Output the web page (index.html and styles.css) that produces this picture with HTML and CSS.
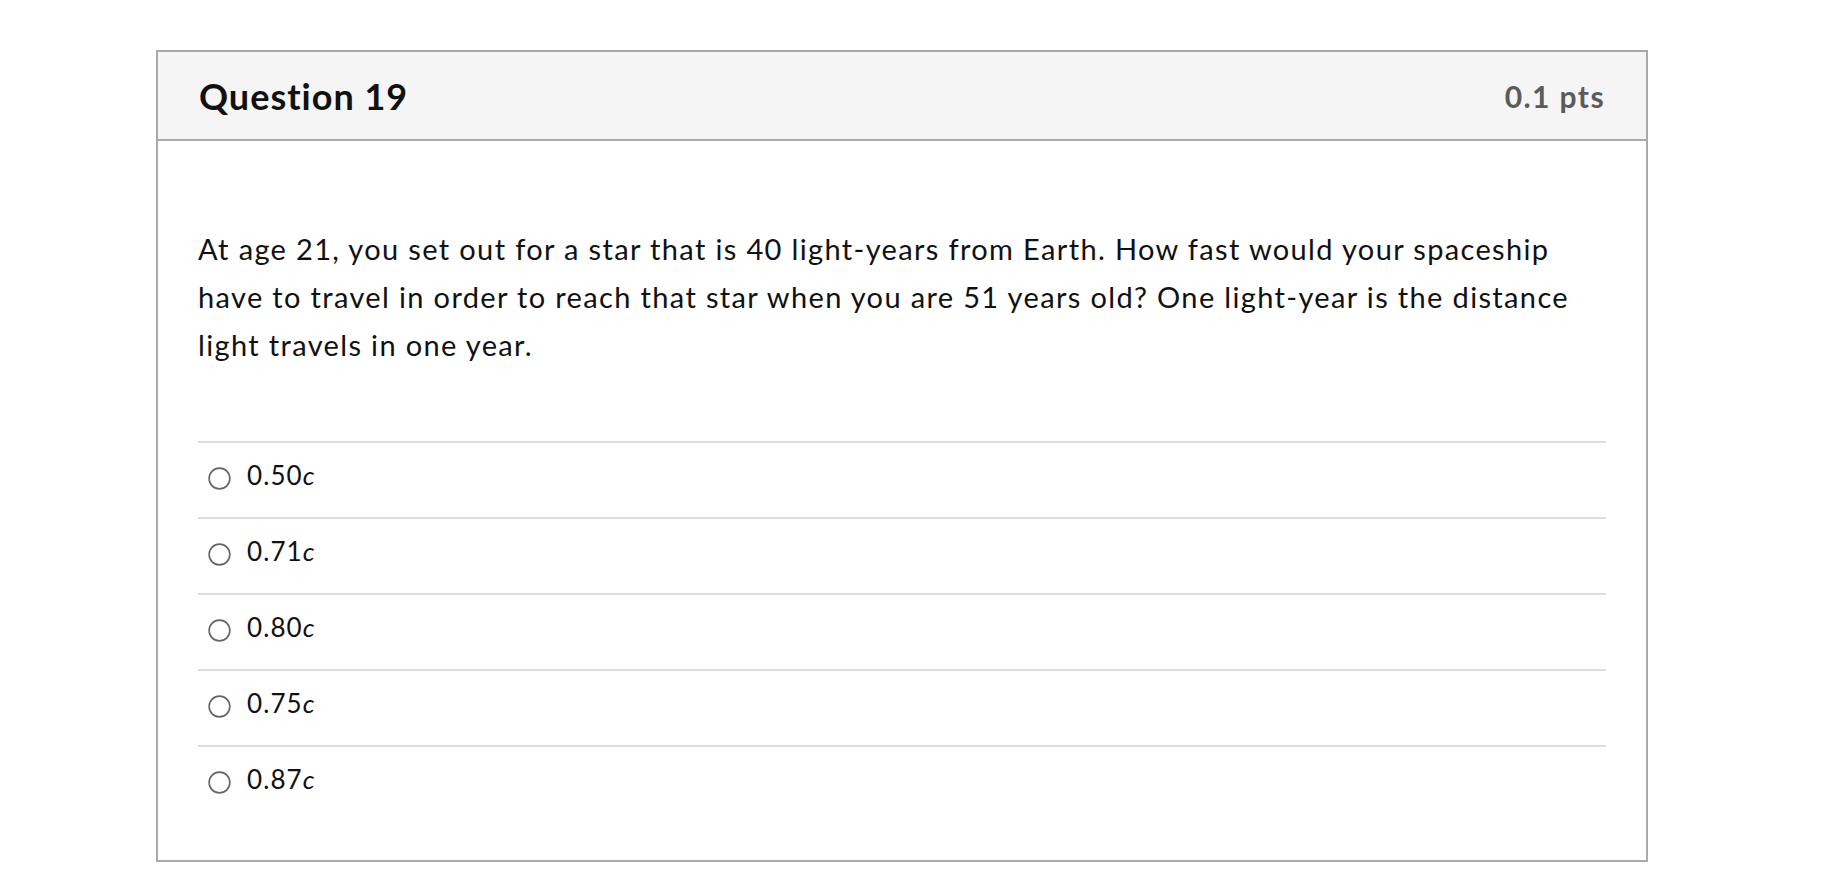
FILE: index.html
```html
<!DOCTYPE html>
<html>
<head>
<meta charset="utf-8">
<link rel="stylesheet" href="styles.css">
</head>
<body>
<div class="card">
  <div class="card-header">
    <h2 class="title">Question 19</h2>
    <span class="pts">0.1 pts</span>
  </div>
  <div class="card-body">
    <p class="question">At age 21, you set out for a star that is 40 light-years from Earth. How fast would your spaceship have to travel in order to reach that star when you are 51 years old? One light-year is the distance light travels in one year.</p>
    <div class="answers">
      <label class="answer"><svg class="radio" viewBox="0 0 24 24"><circle cx="12" cy="12" r="10.8"/></svg><span>0.50<i>c</i></span></label>
      <label class="answer"><svg class="radio" viewBox="0 0 24 24"><circle cx="12" cy="12" r="10.8"/></svg><span>0.71<i>c</i></span></label>
      <label class="answer"><svg class="radio" viewBox="0 0 24 24"><circle cx="12" cy="12" r="10.8"/></svg><span>0.80<i>c</i></span></label>
      <label class="answer"><svg class="radio" viewBox="0 0 24 24"><circle cx="12" cy="12" r="10.8"/></svg><span>0.75<i>c</i></span></label>
      <label class="answer"><svg class="radio" viewBox="0 0 24 24"><circle cx="12" cy="12" r="10.8"/></svg><span>0.87<i>c</i></span></label>
    </div>
  </div>
</div>
</body>
</html>
```
FILE: styles.css
```css
html, body {
  margin: 0;
  padding: 0;
  background: #ffffff;
}
body {
  font-family: Lato, "Open Sans", sans-serif;
  color: #111;
  padding: 50px 0 0 156px;
}
.card {
  width: 1492px;
  box-sizing: border-box;
  border: 2px solid #aaaaaa;
}
.card-header {
  height: 87px;
  background: #f5f5f5;
  border-bottom: 2px solid #aaaaaa;
  display: flex;
  align-items: center;
  justify-content: space-between;
  padding: 0 41px 0 41px;
}
.title {
  margin: 0;
  font-size: 36px;
  font-weight: 700;
  letter-spacing: 1px;
  color: #111;
}
.pts {
  font-size: 30px;
  font-weight: 700;
  letter-spacing: 1.4px;
  color: #5b5b5b;
}
.card-body {
  padding: 84px 40px 39px 40px;
}
.question {
  margin: 0 0 72px 0;
  font-size: 29px;
  line-height: 48px;
  letter-spacing: 1.35px;
}
.answers {
  display: flex;
  flex-direction: column;
}
.answer {
  display: flex;
  align-items: center;
  height: 74px;
  border-top: 2px solid #dddddd;
  font-size: 26px;
  line-height: 30px;
  letter-spacing: 1.1px;
}
.answer span {
  position: relative;
  top: -5px;
}
.answer i {
  font-style: italic;
}
.radio {
  position: relative;
  top: -2px;
  width: 23px;
  height: 23px;
  margin: 0 16px 0 10px;
  flex: none;
}
.radio circle {
  fill: #fff;
  stroke: #666666;
  stroke-width: 1.7;
}
```
